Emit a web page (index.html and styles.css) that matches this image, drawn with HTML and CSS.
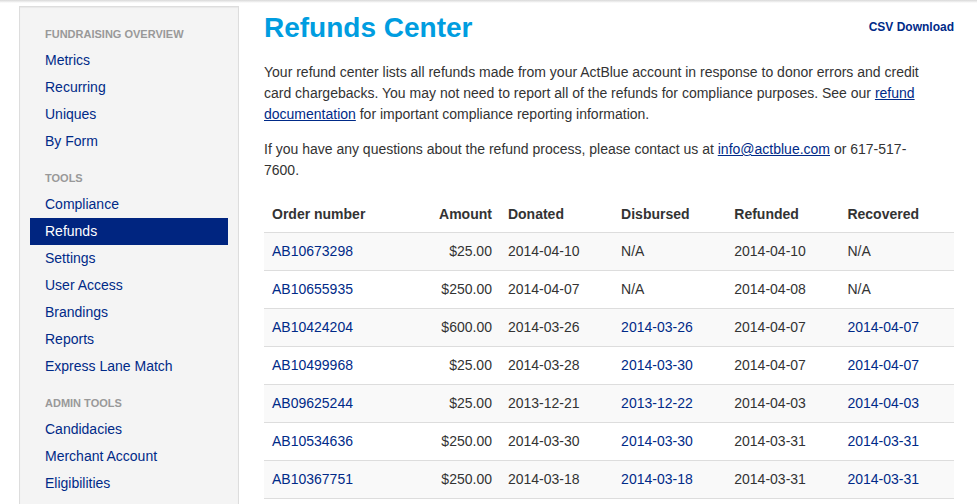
FILE: index.html
```html
<!DOCTYPE html>
<html lang="en">
<head>
<meta charset="utf-8">
<title>Refunds Center</title>
<link rel="stylesheet" href="styles.css">
</head>
<body>
<div class="page">
  <nav class="sidebar" aria-label="Dashboard">
    <h2 class="nav-heading">Fundraising Overview</h2>
    <ul class="nav-list">
      <li><a href="#">Metrics</a></li>
      <li><a href="#">Recurring</a></li>
      <li><a href="#">Uniques</a></li>
      <li><a href="#">By Form</a></li>
    </ul>
    <h2 class="nav-heading">Tools</h2>
    <ul class="nav-list">
      <li><a href="#">Compliance</a></li>
      <li><a href="#" class="active" aria-current="page">Refunds</a></li>
      <li><a href="#">Settings</a></li>
      <li><a href="#">User Access</a></li>
      <li><a href="#">Brandings</a></li>
      <li><a href="#">Reports</a></li>
      <li><a href="#">Express Lane Match</a></li>
    </ul>
    <h2 class="nav-heading">Admin Tools</h2>
    <ul class="nav-list">
      <li><a href="#">Candidacies</a></li>
      <li><a href="#">Merchant Account</a></li>
      <li><a href="#">Eligibilities</a></li>
    </ul>
  </nav>
  <main class="content">
    <header class="title-row">
      <h1>Refunds Center</h1>
      <a class="download" href="#">CSV Download</a>
    </header>
    <div class="intro">
      <p>Your refund center lists all refunds made from your ActBlue account in response to donor errors and credit card chargebacks. You may not need to report all of the refunds for compliance purposes. See our <a href="#">refund documentation</a> for important compliance reporting information.</p>
      <p>If you have any questions about the refund process, please contact us at <a href="#">info@actblue.com</a> or 617-517-<wbr>7600.</p>
    </div>
    <table class="refunds">
      <colgroup><col class="col-order"><col class="col-amount"><col class="col-date" span="3"><col></colgroup>
      <thead>
        <tr><th>Order number</th><th class="amount">Amount</th><th>Donated</th><th>Disbursed</th><th>Refunded</th><th>Recovered</th></tr>
      </thead>
      <tbody>
        <tr><td><a href="#">AB10673298</a></td><td class="amount">$25.00</td><td>2014-04-10</td><td>N/A</td><td>2014-04-10</td><td>N/A</td></tr>
        <tr><td><a href="#">AB10655935</a></td><td class="amount">$250.00</td><td>2014-04-07</td><td>N/A</td><td>2014-04-08</td><td>N/A</td></tr>
        <tr><td><a href="#">AB10424204</a></td><td class="amount">$600.00</td><td>2014-03-26</td><td><a href="#">2014-03-26</a></td><td>2014-04-07</td><td><a href="#">2014-04-07</a></td></tr>
        <tr><td><a href="#">AB10499968</a></td><td class="amount">$25.00</td><td>2014-03-28</td><td><a href="#">2014-03-30</a></td><td>2014-04-07</td><td><a href="#">2014-04-07</a></td></tr>
        <tr><td><a href="#">AB09625244</a></td><td class="amount">$25.00</td><td>2013-12-21</td><td><a href="#">2013-12-22</a></td><td>2014-04-03</td><td><a href="#">2014-04-03</a></td></tr>
        <tr><td><a href="#">AB10534636</a></td><td class="amount">$250.00</td><td>2014-03-30</td><td><a href="#">2014-03-30</a></td><td>2014-03-31</td><td><a href="#">2014-03-31</a></td></tr>
        <tr><td><a href="#">AB10367751</a></td><td class="amount">$250.00</td><td>2014-03-18</td><td><a href="#">2014-03-18</a></td><td>2014-03-31</td><td><a href="#">2014-03-31</a></td></tr>
      </tbody>
    </table>
  </main>
</div>
</body>
</html>
```
FILE: styles.css
```css
* { box-sizing: border-box; }

body {
  margin: 0;
  background: #fff;
  color: #333;
  font: 14px/21px "Liberation Sans", Arial, sans-serif;
}

a { color: #002a88; }

.page {
  display: flex;
  align-items: stretch;
  gap: 25px;
  min-height: 100vh;
  padding: 6px 23px 0 19px;
  background: linear-gradient(#d8d8d8, #fff 3px);
}

.sidebar {
  flex: 0 0 220px;
  padding: 14px 10px 6px;
  background: #f4f4f4;
  border: 1px solid #ddd;
  border-bottom: 0;
  box-shadow: inset 0 1px 1px #e8e8e8;
}

.nav-heading {
  margin: 0;
  padding: 3px 15px 2px;
  color: #999;
  font-size: 11px;
  line-height: 21px;
  text-transform: uppercase;
}

.nav-list {
  margin: 0 0 10px;
  padding: 0;
  list-style: none;
}

.nav-list:last-child { margin-bottom: 0; }

.nav-list a {
  display: block;
  padding: 3px 15px;
  text-decoration: none;
}

.nav-list .active {
  background: #002580;
  color: #fff;
}

.content {
  flex: 1;
  min-width: 0;
}

.title-row {
  display: flex;
  justify-content: space-between;
  padding-top: 1px;
  margin-bottom: 13px;
}

h1 {
  margin: 0;
  color: #009de0;
  font-size: 28px;
  line-height: 42px;
}

.download {
  padding-top: 10px;
  font-size: 12px;
  font-weight: bold;
  text-decoration: none;
}

.intro { padding-right: 20px; }

p { margin: 0 0 14px; }

.refunds {
  width: 100%;
  border-collapse: collapse;
  table-layout: fixed;
}

.col-order { width: 18%; }
.col-amount { width: 16.2%; }
.col-date { width: 16.4%; }

.refunds th,
.refunds td {
  padding: 8px;
  text-align: left;
  border-bottom: 1px solid #ddd;
}

.refunds th { padding: 9px 8px 7px; }
.refunds .amount { text-align: right; }
.refunds a { text-decoration: none; }
.refunds tbody tr:nth-child(odd) { background: #f9f9f9; }
```
